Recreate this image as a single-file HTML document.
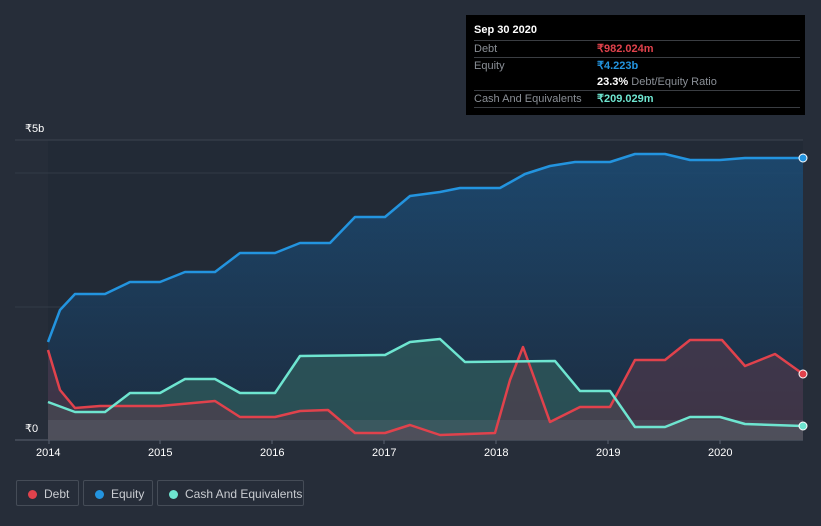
<!DOCTYPE html><html><head><style>
body{margin:0;width:821px;height:526px;background:#262d39;font-family:"Liberation Sans",sans-serif;overflow:hidden;position:relative}
.tt{position:absolute;left:466px;top:15px;width:339px;height:100px;background:#000;font-size:11px;color:#8a8f96}
.tt .h{position:absolute;left:8px;top:9px;color:#fff;font-weight:bold}
.row{position:absolute;left:8px;width:326px;height:16px;border-top:1px solid #3a3d42;line-height:16px}
.row span{position:absolute;left:123px;font-weight:bold}
.leg{position:absolute;top:480px;height:26px;border:1px solid #454c57;border-radius:2px;color:#c9ccd1;font-size:12px;line-height:26px;box-sizing:border-box}
.leg i{position:absolute;left:11px;top:9px;width:9px;height:9px;border-radius:50%}
.leg b{font-weight:normal;position:absolute;left:27px}
.ax{position:absolute;top:447px;color:#fff;font-size:11px}
</style></head><body>
<svg width="821" height="526" style="position:absolute;left:0;top:0">
<rect x="48" y="140" width="755" height="300" fill="#222a36"/>
<line x1="15" y1="140" x2="803" y2="140" stroke="#3c4450"/>
<line x1="15" y1="173" x2="803" y2="173" stroke="#333b47"/>
<line x1="15" y1="307" x2="803" y2="307" stroke="#333b47"/>
<line x1="15" y1="440" x2="803" y2="440" stroke="#596170"/>
<g stroke="#596170"><line x1="49" y1="440" x2="49" y2="444"/><line x1="160" y1="440" x2="160" y2="444"/><line x1="272" y1="440" x2="272" y2="444"/><line x1="384" y1="440" x2="384" y2="444"/><line x1="496" y1="440" x2="496" y2="444"/><line x1="608" y1="440" x2="608" y2="444"/><line x1="720" y1="440" x2="720" y2="444"/></g>
<defs><linearGradient id="eg" x1="0" y1="0" x2="0" y2="1"><stop offset="0" stop-color="#1c4a72"/><stop offset="1" stop-color="#1c2c40"/></linearGradient></defs>
<polygon fill="url(#eg)" opacity="0.9" points="48,342 60,310 75,294 105,294 130,282 160,282 185,272 215,272 240,253 275,253 300,243 330,243 355,217 385,217 410,196 440,192 460,188 500,188 525,174 550,166 575,162 610,162 635,154 665,154 690,160 720,160 745,158 803,158 803,440 48,440"/>
<polygon fill="#2f5b5b" opacity="0.75" points="48,402 75,412 105,412 130,393 160,393 185,379 215,379 240,393 275,393 300,356 385,355 410,342 440,339 465,362 555,361 580,391 610,391 635,427 665,427 690,417 720,417 745,424 803,426 803,440 48,440"/>
<polygon fill="#5a3a4a" opacity="0.55" points="48,350 60,390 75,408 100,406 160,406 215,401 240,417 275,417 300,411 328,410 355,433 385,433 410,425 440,435 495,433 510,380 523,347 535,380 550,422 580,407 610,407 635,360 665,360 690,340 722,340 745,366 775,354 803,374 803,440 48,440"/>
<polygon fill="#6b7480" opacity="0.25" points="48,420 803,420 803,440 48,440"/>
<g fill="none" stroke-width="2.5" stroke-linejoin="round">
<polyline stroke="#e0424c" points="48,350 60,390 75,408 100,406 160,406 215,401 240,417 275,417 300,411 328,410 355,433 385,433 410,425 440,435 495,433 510,380 523,347 535,380 550,422 580,407 610,407 635,360 665,360 690,340 722,340 745,366 775,354 803,374"/>
<polyline stroke="#6ee5d0" points="48,402 75,412 105,412 130,393 160,393 185,379 215,379 240,393 275,393 300,356 385,355 410,342 440,339 465,362 555,361 580,391 610,391 635,427 665,427 690,417 720,417 745,424 803,426"/>
<polyline stroke="#2394df" points="48,342 60,310 75,294 105,294 130,282 160,282 185,272 215,272 240,253 275,253 300,243 330,243 355,217 385,217 410,196 440,192 460,188 500,188 525,174 550,166 575,162 610,162 635,154 665,154 690,160 720,160 745,158 803,158"/>
</g>
<circle cx="803" cy="158" r="4" fill="#2394df" stroke="#fff"/>
<circle cx="803" cy="374" r="4" fill="#e0424c" stroke="#fff"/>
<circle cx="803" cy="426" r="4" fill="#6ee5d0" stroke="#fff"/>
</svg>
<div style="position:absolute;left:25px;top:122px;color:#fff;font-size:11px">₹5b</div>
<div style="position:absolute;left:25px;top:422px;color:#fff;font-size:11px">₹0</div>
<div class="ax" style="left:36px">2014</div><div class="ax" style="left:148px">2015</div><div class="ax" style="left:260px">2016</div><div class="ax" style="left:372px">2017</div><div class="ax" style="left:484px">2018</div><div class="ax" style="left:596px">2019</div><div class="ax" style="left:708px">2020</div>
<div class="tt"><div class="h">Sep 30 2020</div>
<div class="row" style="top:25px">Debt<span style="color:#e0424c">₹982.024m</span></div>
<div class="row" style="top:42px">Equity<span style="color:#2394df">₹4.223b</span></div>
<div style="position:absolute;left:131px;top:59px;line-height:16px"><b style="color:#fff">23.3%</b> Debt/Equity Ratio</div>
<div class="row" style="top:75px">Cash And Equivalents<span style="color:#6ee5d0">₹209.029m</span></div>
<div class="row" style="top:92px;height:0"></div>
</div>
<div class="leg" style="left:16px;width:63px"><i style="background:#e0424c"></i><b>Debt</b></div>
<div class="leg" style="left:83px;width:70px"><i style="background:#2394df"></i><b>Equity</b></div>
<div class="leg" style="left:157px;width:147px"><i style="background:#6ee5d0"></i><b>Cash And Equivalents</b></div>
</body></html>
